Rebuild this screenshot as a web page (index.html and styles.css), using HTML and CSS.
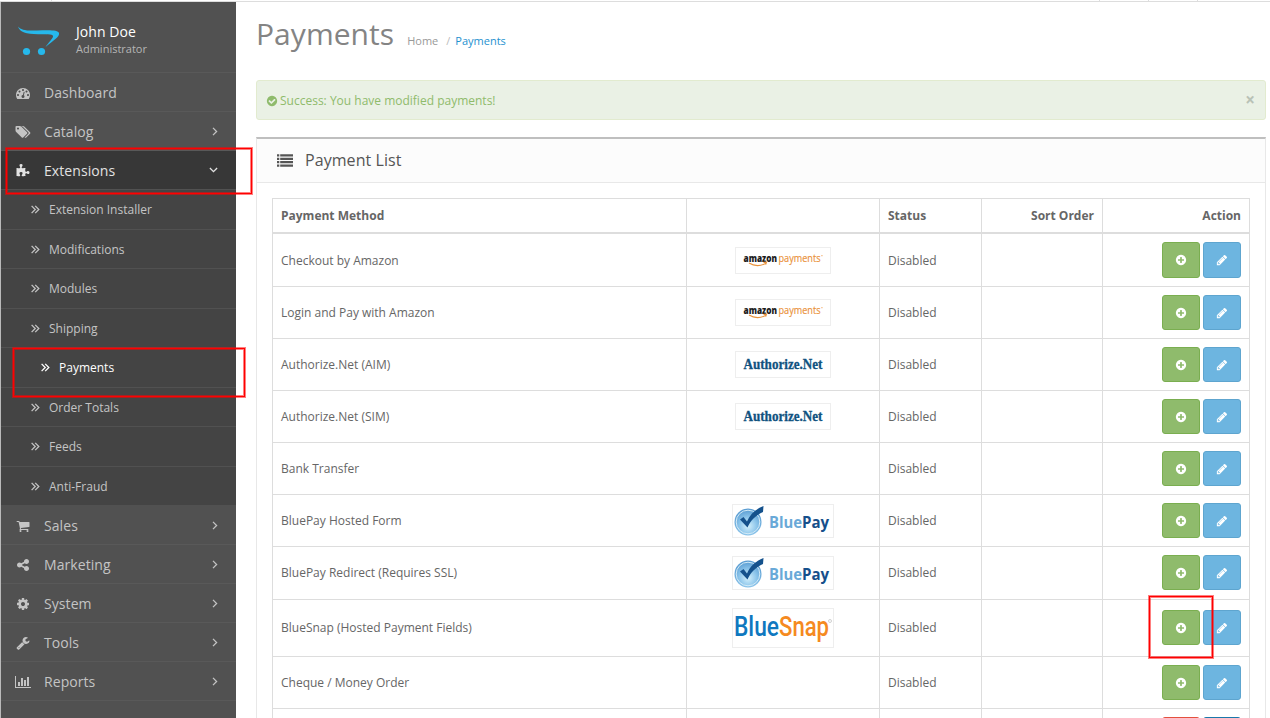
FILE: index.html
```
<!DOCTYPE html>
<html lang="en">
<head>
<meta charset="utf-8">
<title>Payments</title>
<link rel="stylesheet" href="styles.css">
</head>
<body>
<svg class="defs" aria-hidden="true">
  <defs>
    <radialGradient id="ball" cx="50%" cy="65%" r="60%"><stop offset="0" stop-color="#d3f0fc"/><stop offset=".55" stop-color="#8bc4ea"/><stop offset="1" stop-color="#5a9dd3"/></radialGradient>
  </defs>
  <symbol id="dash" viewBox="0 0 1792 1792"><path d="M384 1152q0-53-37.500-90.500t-90.500-37.500-90.500 37.500-37.500 90.500 37.500 90.500 90.500 37.500 90.500-37.500 37.500-90.500zm192-448q0-53-37.500-90.500t-90.500-37.500-90.500 37.500-37.500 90.500 37.500 90.500 90.500 37.500 90.500-37.500 37.500-90.500zm428 481l101-382q6-26-7.500-48.500t-38.500-29.500-48 6.500-30 39.500l-101 382q-60 5-107 43.500t-63 98.500q-20 77 20 146t117 89 146-20 89-117q16-60-6-117t-72-91zm660-33q0-53-37.500-90.500t-90.500-37.500-90.500 37.500-37.500 90.500 37.500 90.500 90.500 37.500 90.500-37.500 37.500-90.500zm-640-640q0-53-37.500-90.500t-90.500-37.500-90.500 37.500-37.500 90.500 37.500 90.500 90.500 37.500 90.500-37.500 37.500-90.500zm448 192q0-53-37.500-90.500t-90.500-37.500-90.500 37.500-37.500 90.500 37.500 90.500 90.500 37.500 90.500-37.500 37.500-90.500zm320 448q0 261-141 483-19 29-54 29h-1402q-35 0-54-29-141-221-141-483 0-182 71-348t191-286 286-191 348-71 348 71 286 191 191 286 71 348z"/></symbol>
  <symbol id="tags" viewBox="0 0 1920 1792"><path d="M448 448q0-53-37.500-90.500t-90.500-37.500-90.500 37.500-37.500 90.500 37.500 90.500 90.500 37.500 90.500-37.500 37.500-90.500zm1067 576q0 53-37 90l-491 492q-39 37-91 37-53 0-90-37l-715-716q-38-37-64.500-101t-26.500-117v-416q0-52 38-90t90-38h416q53 0 117 26.500t102 64.500l715 714q37 39 37 91zm384 0q0 53-37 90l-491 492q-39 37-91 37-36 0-59-14t-53-45l470-470q37-37 37-90 0-52-37-91l-715-714q-38-38-102-64.500t-117-26.500h224q53 0 117 26.500t102 64.500l715 714q37 39 37 91z"/></symbol>
  <symbol id="puzzle" viewBox="0 0 1792 1792"><path d="M1728 1098q0 81-44.500 135t-123.500 54q-41 0-77.500-17.500t-59-38-56.500-38-71-17.500q-110 0-110 124 0 39 16 115t15 115v5q-22 0-33 1-34 3-97.500 11.500t-115.500 13.500-98 5q-61 0-103-26.500t-42-83.500q0-37 17.500-71t38-56.500 38-59 17.500-77.500q0-79-54-123.500t-135-44.500q-84 0-143 45.500t-59 127.500q0 43 15 83t33.500 64.500 33.500 53 15 50.500q0 45-46 89-37 35-117 35-95 0-245-24-9-2-27.500-4t-27.500-4l-13-2q-1 0-3-1-2 0-2-1v-1024q2 1 17.500 3.500t34 5 21.500 3.500q150 24 245 24 80 0 117-35 46-44 46-89 0-22-15-50.500t-33.500-53-33.500-64.500-15-83q0-82 59-127.500t144-45.500q80 0 134 44.500t54 123.500q0 41-17.500 77.500t-38 59-38 56.500-17.500 71q0 57 42 83.500t103 26.500q64 0 180-15t163-17v2q-1 2-3.500 17.500t-5 34-3.500 21.500q-24 150-24 245 0 80 35 117 44 46 89 46 22 0 50.500-15t53-33.500 64.500-33.500 83-15q82 0 127.500 59t45.500 143z"/></symbol>
  <symbol id="cart" viewBox="0 0 1792 1792"><path d="M704 1536q0 52-38 90t-90 38-90-38-38-90 38-90 90-38 90 38 38 90zm896 0q0 52-38 90t-90 38-90-38-38-90 38-90 90-38 90 38 38 90zm128-1088v512q0 24-16.500 42.500t-40.500 21.500l-1044 122q13 60 13 70 0 16-24 64h920q26 0 45 19t19 45-19 45-45 19h-1024q-26 0-45-19t-19-45q0-11 8-31.500t16-36 21.500-40 15.500-29.500l-177-823h-204q-26 0-45-19t-19-45 19-45 45-19h256q16 0 28.500 6.500t19.500 15.500 13 24.500 8 26 5.500 29.500 4.500 26h1201q26 0 45 19t19 45z"/></symbol>
  <symbol id="share" viewBox="0 0 1792 1792"><path d="M1344 1024q133 0 226.500 93.500t93.500 226.500-93.500 226.500-226.500 93.500-226.500-93.500-93.500-226.500q0-12 2-34l-360-180q-92 86-218 86-133 0-226.500-93.500t-93.500-226.500 93.500-226.500 226.500-93.500q126 0 218 86l360-180q-2-22-2-34 0-133 93.500-226.500t226.500-93.500 226.500 93.500 93.500 226.500-93.500 226.500-226.500 93.500q-126 0-218-86l-360 180q2 22 2 34t-2 34l360 180q92-86 218-86z"/></symbol>
  <symbol id="cog" viewBox="0 0 1792 1792"><path d="M1152 896q0-106-75-181t-181-75-181 75-75 181 75 181 181 75 181-75 75-181zm512-109v222q0 12-8 23t-20 13l-185 28q-19 54-39 91 35 50 107 138 10 12 10 25t-9 23q-27 37-99 108t-94 71q-12 0-26-9l-138-108q-44 23-91 38-16 136-29 186-7 28-36 28h-222q-14 0-24.500-8.500t-11.500-21.500l-28-184q-49-16-90-37l-141 107q-10 9-25 9-14 0-25-11-126-114-165-168-7-10-7-23 0-12 8-23 15-21 51-66.500t54-70.500q-27-50-41-99l-183-27q-13-2-21-12.500t-8-23.500v-222q0-12 8-23t19-13l186-28q14-46 39-92-40-57-107-138-10-12-10-24 0-10 9-23 26-36 98.500-107.500t94.500-71.500q13 0 26 10l138 107q44-23 91-38 16-136 29-186 7-28 36-28h222q14 0 24.500 8.500t11.500 21.500l28 184q49 16 90 37l142-107q9-9 24-9 13 0 25 10 129 119 165 170 7 8 7 22 0 12-8 23-15 21-51 66.500t-54 70.500q26 50 41 98l183 28q13 2 21 12.500t8 23.500z"/></symbol>
  <symbol id="wrench" viewBox="0 0 1792 1792"><path d="M448 1472q0-26-19-45t-45-19-45 19-19 45 19 45 45 19 45-19 19-45zm644-420l-682 682q-37 37-90 37-52 0-91-37l-106-108q-38-36-38-90 0-53 38-91l681-681q39 98 114.500 173.500t173.500 114.500zm634-435q0 39-23 106-47 134-164.500 217.500t-258.500 83.500q-185 0-316.500-131.500t-131.500-316.500 131.500-316.500 316.500-131.500q58 0 121.500 16.500t107.500 46.500q16 11 16 28t-16 28l-293 169v224l193 107q5-3 79-48.500t135.500-81 70.500-35.500q15 0 23.500 10t8.500 25z"/></symbol>
  <symbol id="chart" viewBox="0 0 2048 1792"><path d="M640 896v512h-256v-512h256zm384-512v1024h-256v-1024h256zm1024 1152v128h-2048v-1536h128v1408h1920zm-640-896v768h-256v-768h256zm384-384v1152h-256v-1152h256z"/></symbol>
  <symbol id="plus" viewBox="0 0 1792 1792"><path d="M1344 960v-128q0-26-19-45t-45-19h-256v-256q0-26-19-45t-45-19h-128q-26 0-45 19t-19 45v256h-256q-26 0-45 19t-19 45v128q0 26 19 45t45 19h256v256q0 26 19 45t45 19h128q26 0 45-19t19-45v-256h256q26 0 45-19t19-45zm320-64q0 209-103 385.500t-279.500 279.500-385.500 103-385.500-103-279.500-279.500-103-385.500 103-385.500 279.500-279.500 385.500-103 385.500 103 279.500 279.500 103 385.500z"/></symbol>
  <symbol id="check" viewBox="0 0 1792 1792"><path d="M1412 734q0-28-18-46l-91-90q-19-19-45-19t-45 19l-408 407-226-226q-19-19-45-19t-45 19l-91 90q-18 18-18 46 0 27 18 45l362 362q19 19 45 19 27 0 46-19l543-543q18-18 18-45zm252 162q0 209-103 385.500t-279.500 279.500-385.500 103-385.500-103-279.500-279.500-103-385.500 103-385.500 279.500-279.500 385.500-103 385.500 103 279.500 279.500 103 385.500z"/></symbol>
  <symbol id="pencil" viewBox="0 0 1792 1792"><path d="M491 1536l91-91-235-235-91 91v107h128v128h107zm523-928q0-22-22-22-10 0-17 7l-542 542q-7 7-7 17 0 22 22 22 10 0 17-7l542-542q7-7 7-17zm-54-192l416 416-832 832h-416v-416zm683 96q0 53-37 90l-166 166-416-416 166-165q36-38 90-38 53 0 91 38l235 234q37 39 37 91z"/></symbol>
  <symbol id="list" viewBox="0 0 16 13"><path d="M0 .3h2.300v2.200H0zM3.200 .3H16v2.200H3.200zM0 3.700h2.300v2.200H0zM3.200 3.700H16v2.200H3.200zM0 7.100h2.300v2.200H0zM3.200 7.100H16v2.200H3.200zM0 10.500h2.300v2.200H0zM3.200 10.500H16v2.200H3.200z"/></symbol>
  <symbol id="right" viewBox="0 0 6 9"><path d="M1 .9L4.600 4.500 1 8.100" fill="none" stroke="currentColor" stroke-width="1.300"/></symbol>
  <symbol id="down" viewBox="0 0 9 6"><path d="M.9 1L4.500 4.600 8.100 1" fill="none" stroke="currentColor" stroke-width="1.300"/></symbol>
  <symbol id="double" viewBox="0 0 9 9"><path d="M.6 .9L4.200 4.500.6 8.100M4.200 .9l3.600 3.600-3.600 3.600" fill="none" stroke="currentColor" stroke-width="1.300"/></symbol>
</svg>

<div class="topbar"><i class="tick t1"></i><i class="tick t2"></i><i class="tick t3"></i><i class="tick t4"></i></div>
<div class="page">
  <nav class="sidebar">
    <div class="profile">
      <svg class="logo" viewBox="0 0 44 32"><path d="M1 1.500C4 5 9 6 20 5.500c12-.5 21-.8 22 2.500 1 4-6 7.500-13.500 14C31 18 36.500 13 36 11c-.5-2-7-1.500-15-1.700C9 9 3 7.500 1 1.500z" fill="#26b8eb"/><circle cx="9.500" cy="26.500" r="3.600" fill="#26b8eb"/><circle cx="24.500" cy="26.500" r="3.600" fill="#26b8eb"/></svg>
      <div class="who"><div class="name">John Doe</div><div class="role">Administrator</div></div>
    </div>
    <a class="item"><svg class="ico"><use href="#dash"/></svg><span>Dashboard</span></a>
    <a class="item"><svg class="ico wide"><use href="#tags"/></svg><span>Catalog</span><svg class="arrow"><use href="#right"/></svg></a>
    <a class="item open"><svg class="ico"><use href="#puzzle"/></svg><span>Extensions</span><svg class="arrow down"><use href="#down"/></svg></a>
    <div class="sub">
      <a class="subitem"><svg><use href="#double"/></svg>Extension Installer</a>
      <a class="subitem"><svg><use href="#double"/></svg>Modifications</a>
      <a class="subitem"><svg><use href="#double"/></svg>Modules</a>
      <a class="subitem"><svg><use href="#double"/></svg>Shipping</a>
      <a class="subitem active"><svg><use href="#double"/></svg>Payments</a>
      <a class="subitem"><svg><use href="#double"/></svg>Order Totals</a>
      <a class="subitem"><svg><use href="#double"/></svg>Feeds</a>
      <a class="subitem"><svg><use href="#double"/></svg>Anti-Fraud</a>
    </div>
    <a class="item"><svg class="ico"><use href="#cart"/></svg><span>Sales</span><svg class="arrow"><use href="#right"/></svg></a>
    <a class="item"><svg class="ico"><use href="#share"/></svg><span>Marketing</span><svg class="arrow"><use href="#right"/></svg></a>
    <a class="item"><svg class="ico"><use href="#cog"/></svg><span>System</span><svg class="arrow"><use href="#right"/></svg></a>
    <a class="item"><svg class="ico"><use href="#wrench"/></svg><span>Tools</span><svg class="arrow"><use href="#right"/></svg></a>
    <a class="item"><svg class="ico wide"><use href="#chart"/></svg><span>Reports</span><svg class="arrow"><use href="#right"/></svg></a>
  </nav>
  <main class="content">
    <header class="head"><h1>Payments</h1><div class="crumbs"><span>Home</span><i>/</i><a>Payments</a></div></header>
    <div class="alert"><svg><use href="#check"/></svg><span>Success: You have modified payments!</span><b>×</b></div>
    <section class="panel">
      <div class="panel-head"><svg><use href="#list"/></svg><h3>Payment List</h3></div>
      <div class="panel-body">
        <table class="grid">
          <colgroup><col class="c1"><col class="c2"><col class="c3"><col class="c4"><col class="c5"></colgroup>
          <thead><tr><th>Payment Method</th><th></th><th>Status</th><th class="r">Sort Order</th><th class="r">Action</th></tr></thead>
          <tbody>
            <tr class="first"><td>Checkout by Amazon</td><td class="pic"><svg class="small" viewBox="0 0 96 27"><text class="amz" x="8.500" y="15" textLength="33.500" lengthAdjust="spacingAndGlyphs">amazon</text><text class="amzpay" x="43.500" y="15" textLength="42" lengthAdjust="spacingAndGlyphs">payments</text><path d="M14 16q8 5 17 .3M28.500 15.400l3-.2-.8 2.500" fill="none" stroke="#e8923c" stroke-width="1.100"/><path d="M86 8.700h1.800" stroke="#f0b070" stroke-width=".8"/></svg></td><td>Disabled</td><td></td><td><div class="acts"><a class="btn add"><svg><use href="#plus"/></svg></a><a class="btn edit"><svg><use href="#pencil"/></svg></a></div></td></tr>
            <tr><td>Login and Pay with Amazon</td><td class="pic"><svg class="small" viewBox="0 0 96 27"><text class="amz" x="8.500" y="15" textLength="33.500" lengthAdjust="spacingAndGlyphs">amazon</text><text class="amzpay" x="43.500" y="15" textLength="42" lengthAdjust="spacingAndGlyphs">payments</text><path d="M14 16q8 5 17 .3M28.500 15.400l3-.2-.8 2.500" fill="none" stroke="#e8923c" stroke-width="1.100"/><path d="M86 8.700h1.800" stroke="#f0b070" stroke-width=".8"/></svg></td><td>Disabled</td><td></td><td><div class="acts"><a class="btn add"><svg><use href="#plus"/></svg></a><a class="btn edit"><svg><use href="#pencil"/></svg></a></div></td></tr>
            <tr><td>Authorize.Net (AIM)</td><td class="pic"><svg class="small" viewBox="0 0 96 27"><text class="auth" x="8.500" y="18" textLength="79" lengthAdjust="spacingAndGlyphs">Authorize.Net</text></svg></td><td>Disabled</td><td></td><td><div class="acts"><a class="btn add"><svg><use href="#plus"/></svg></a><a class="btn edit"><svg><use href="#pencil"/></svg></a></div></td></tr>
            <tr><td>Authorize.Net (SIM)</td><td class="pic"><svg class="small" viewBox="0 0 96 27"><text class="auth" x="8.500" y="18" textLength="79" lengthAdjust="spacingAndGlyphs">Authorize.Net</text></svg></td><td>Disabled</td><td></td><td><div class="acts"><a class="btn add"><svg><use href="#plus"/></svg></a><a class="btn edit"><svg><use href="#pencil"/></svg></a></div></td></tr>
            <tr><td>Bank Transfer</td><td></td><td>Disabled</td><td></td><td><div class="acts"><a class="btn add"><svg><use href="#plus"/></svg></a><a class="btn edit"><svg><use href="#pencil"/></svg></a></div></td></tr>
            <tr><td>BluePay Hosted Form</td><td class="pic"><svg class="mid" viewBox="0 0 102 34"><circle cx="16" cy="18" r="13.500" fill="url(#ball)"/><circle cx="16" cy="18" r="11.800" fill="none" stroke="#d4ebf7" stroke-width="1"/><path d="M8 15.500l3.500-2.500 3.500 4.500C18 10.500 23.500 5 31.500 2L31 8C24 11 18.500 16.500 15.500 23.500z" fill="#14518c"/><text class="bp bp-light" x="37" y="24" textLength="33" lengthAdjust="spacingAndGlyphs">Blue</text><text class="bp bp-dark" x="70" y="24" textLength="27" lengthAdjust="spacingAndGlyphs">Pay</text></svg></td><td>Disabled</td><td></td><td><div class="acts"><a class="btn add"><svg><use href="#plus"/></svg></a><a class="btn edit"><svg><use href="#pencil"/></svg></a></div></td></tr>
            <tr class="tall"><td>BluePay Redirect (Requires SSL)</td><td class="pic"><svg class="mid" viewBox="0 0 102 34"><circle cx="16" cy="18" r="13.500" fill="url(#ball)"/><circle cx="16" cy="18" r="11.800" fill="none" stroke="#d4ebf7" stroke-width="1"/><path d="M8 15.500l3.500-2.500 3.500 4.500C18 10.500 23.500 5 31.500 2L31 8C24 11 18.500 16.500 15.500 23.500z" fill="#14518c"/><text class="bp bp-light" x="37" y="24" textLength="33" lengthAdjust="spacingAndGlyphs">Blue</text><text class="bp bp-dark" x="70" y="24" textLength="27" lengthAdjust="spacingAndGlyphs">Pay</text></svg></td><td>Disabled</td><td></td><td><div class="acts"><a class="btn add"><svg><use href="#plus"/></svg></a><a class="btn edit"><svg><use href="#pencil"/></svg></a></div></td></tr>
            <tr class="taller"><td>BlueSnap (Hosted Payment Fields)</td><td class="pic"><svg class="big" viewBox="0 0 102 40"><text class="bs bs-blue" x="2" y="28" textLength="45" lengthAdjust="spacingAndGlyphs">Blue</text><text class="bs bs-orange" x="47" y="28" textLength="50" lengthAdjust="spacingAndGlyphs">Snap</text><circle cx="98" cy="13" r="1.500" fill="none" stroke="#c4c4c4" stroke-width=".8"/></svg></td><td>Disabled</td><td></td><td><div class="acts"><a class="btn add"><svg><use href="#plus"/></svg></a><a class="btn edit"><svg><use href="#pencil"/></svg></a></div></td></tr>
            <tr><td>Cheque / Money Order</td><td></td><td>Disabled</td><td></td><td><div class="acts"><a class="btn add"><svg><use href="#plus"/></svg></a><a class="btn edit"><svg><use href="#pencil"/></svg></a></div></td></tr>
            <tr><td></td><td></td><td></td><td></td><td><div class="acts"><a class="btn remove"></a><a class="btn config"></a></div></td></tr>
          </tbody>
        </table>
      </div>
    </section>
  </main>
</div>
<div class="mark m1"></div><div class="mark m2"></div><div class="mark m3"></div>
</body>
</html>
```
FILE: styles.css
```
* { box-sizing: border-box; }
html { overflow: hidden; height: 718px; }
body { margin: 0; width: 1270px; height: 718px; overflow: hidden; position: relative; background: #fff; color: #666; font: 12px/18px "Open Sans", sans-serif; }
svg { fill: currentColor; flex: none; display: block; }
.defs { position: absolute; width: 0; height: 0; }
.topbar { position: relative; height: 2px; border-bottom: 1px solid #ddd; }
.tick { position: absolute; top: 0; width: 1px; height: 1px; background: #ddd; }
.t1 { left: 51px; } .t2 { left: 1099px; } .t3 { left: 1148px; } .t4 { left: 1197px; }
.page { display: flex; height: 716px; overflow: hidden; border-left: 1px solid #bababa; }

.sidebar { width: 235px; height: 716px; background: #515151; color: #c4c4c4; flex: none; }
.profile { height: 71px; display: flex; padding: 22px 0 0 17px; border-bottom: 1px solid #595959; }
.logo { width: 44px; height: 32px; margin-top: 1px; margin-left: -1px; margin-right: 1px; }
.who { margin-left: 14px; }
.name { font-size: 14px; line-height: 16px; color: #fff; letter-spacing: .05px; }
.role { font-size: 11px; line-height: 16px; margin-top: 1px; color: #b5b5b5; }
.item { display: flex; align-items: center; height: 39px; padding: 2px 18px 0 15px; border-bottom: 1px solid #595959; font-size: 14px; letter-spacing: .07px; }
.item span { margin-left: 14px; flex: 1; }
.ico { width: 14px; height: 14px; }
.ico.wide { width: 16px; margin-left: -1px; margin-right: -1px; }
.arrow { width: 6px; height: 9px; margin-top: -2px; }
.arrow.down { width: 9px; height: 6px; }
.item.open { background: #373737; color: #e2e2e2; border-color: #515151; }
.sub { background: #444; }
.subitem { display: flex; align-items: center; height: 39.5px; padding: 1.5px 0 0 30px; gap: 9px; border-bottom: 1px solid #515151; }
.subitem svg { width: 9px; height: 9px; margin-top: -1px; }
.subitem.active { padding-left: 40px; color: #fff; }

.content { width: 1010px; margin-left: 20px; flex: none; }
.head { display: flex; height: 78px; padding-top: 11px; }
h1 { margin: 0; font-size: 30px; line-height: 42px; font-weight: 400; color: #848484; letter-spacing: .05px; }
.crumbs { display: flex; margin: 19px 0 0 13px; font-size: 11px; line-height: 18px; color: #999; }
.crumbs i { font-style: normal; margin: 0 5px 0 8px; color: #bbb; }
.crumbs a { color: #1e91cf; }
.alert { display: flex; align-items: center; height: 40px; padding: 1px 10px 0 9px; background: #eaf1e5; border: 1px solid #e2ebcf; border-radius: 3px; color: #8fbb6c; }
.alert svg { width: 12px; height: 12px; margin-right: 2px; }
.alert span { flex: 1; }
.alert b { font-size: 17px; margin-top: -1px; color: #b9c2b6; }
.panel { margin-top: 17px; height: 620px; border: 1px solid #e8e8e8; border-top: 2px solid #bfbfbf; }
.panel-head { display: flex; align-items: center; height: 44px; padding-left: 20px; background: #fcfcfc; border-bottom: 1px solid #e8e8e8; }
.panel-head svg { width: 16px; height: 13px; color: #555; margin-top: -1px; }
h3 { margin: -2px 0 0 12px; font-size: 16px; line-height: 22px; font-weight: 400; color: #555; letter-spacing: .07px; }
.panel-body { padding: 15px; }
.grid { width: 978px; table-layout: fixed; border-collapse: separate; border-spacing: 0; border-top: 1px solid #ddd; border-left: 1px solid #ddd; }
.c1 { width: 414px; } .c2 { width: 193px; } .c3 { width: 102px; } .c4 { width: 121px; } .c5 { width: 147px; }
th, td { padding: 0 8px; text-align: left; vertical-align: middle; border-right: 1px solid #ddd; border-bottom: 1px solid #ddd; }
th { height: 35px; border-bottom-width: 2px; font-weight: 700; }
th.r { text-align: right; }
td { height: 52px; }
.first td { height: 53px; } .tall td { height: 53px; } .taller td { height: 57px; }
.first td:nth-child(odd):not(:last-child) { padding-top: 2px; }
.pic svg { margin: 0 auto; outline: 1px solid #eee; outline-offset: -1px; }
.small { width: 96px; height: 27px; }
.mid { width: 102px; height: 34px; }
.big { width: 102px; height: 40px; }
.acts { display: flex; justify-content: flex-end; gap: 3px; }
.btn { display: flex; align-items: center; justify-content: center; width: 38px; height: 35px; border: 1px solid; border-radius: 3px; color: #fff; }
.first .btn { height: 36px; }
.tall .acts, .taller .acts { padding-bottom: 1px; }
.btn svg { width: 12px; height: 12px; }
.add { background: #8fbb6c; border-color: #7aae50; }
.edit { background: #6db5e0; border-color: #5ea5cf; }
.remove { background: #f56b6b; border-color: #e3503e; }
.config { background: #1e91cf; border-color: #1978ab; }

.amz { font: 800 10.500px "Open Sans", sans-serif; fill: #1c1c1c; }
.amzpay { font: 400 10.500px "Open Sans", sans-serif; fill: #ea9038; stroke: #ea9038; stroke-width: .15px; }
.auth { font: 700 14.500px "Liberation Serif", serif; fill: #10527f; stroke: #10527f; stroke-width: .3px; }
.bp { font: 700 16px "Open Sans", sans-serif; }
.bp-light { fill: #69a9d8; }
.bp-dark { fill: #164f8b; }
.bs { font: 500 27px Roboto, sans-serif; }
.bs-blue { fill: #0f78bf; }
.bs-orange { fill: #f58a1f; }

.mark { position: absolute; border: 1px solid #f00; box-shadow: 0 0 0 1px rgba(255,0,0,.5), inset 0 0 0 1px rgba(255,0,0,.5); }
.m1 { left: 6px; top: 148px; width: 246px; height: 46px; }
.m2 { left: 13px; top: 348px; width: 232px; height: 49px; }
.m3 { left: 1149px; top: 596px; width: 64px; height: 62px; }
```
